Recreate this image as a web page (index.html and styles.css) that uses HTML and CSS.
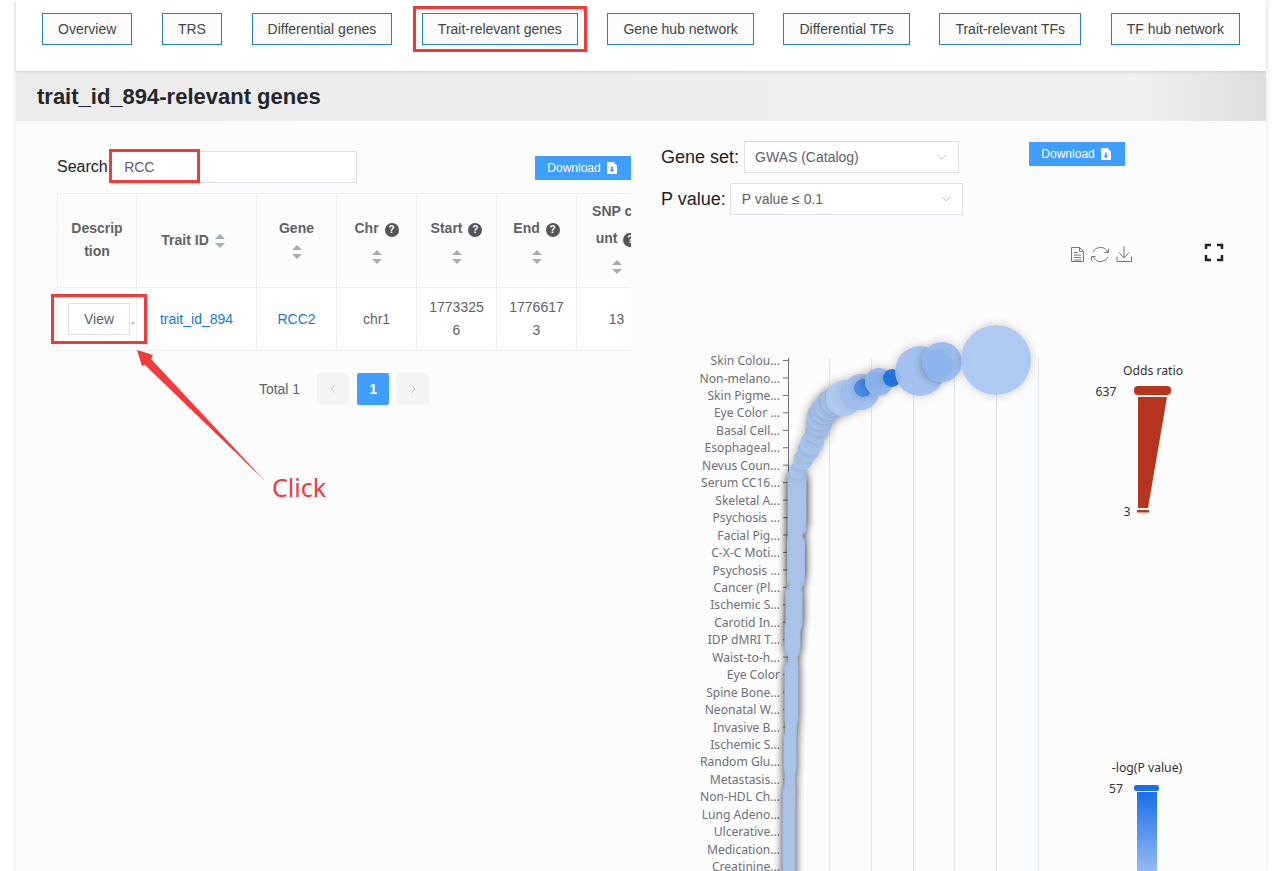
FILE: index.html
```html
<!DOCTYPE html>
<html lang="en">
<head>
    <meta charset="UTF-8">
    <meta name="viewport" content="width=device-width, initial-scale=1.0">
    <title>Trait-relevant genes</title>
    <link rel="stylesheet" href="styles.css">
</head>
<body>
    <div class="page">
        <nav class="tabs">
            <a class="tab">Overview</a>
            <a class="tab">TRS</a>
            <a class="tab">Differential genes</a>
            <a class="tab">Trait-relevant genes</a>
            <a class="tab">Gene hub network</a>
            <a class="tab">Differential TFs</a>
            <a class="tab">Trait-relevant TFs</a>
            <a class="tab">TF hub network</a>
        </nav>

        <h2 class="title">trait_id_894-relevant genes</h2>

        <main class="content">
            <section class="left">
                <div class="search-row">
                    <label class="search-label">Search:</label>
                    <input class="search-input" type="text" value="RCC">
                    <button class="download download-left">Download
                        <svg class="file-icon" viewBox="0 0 10 12"><path fill="#fff" d="M1 0h5.500L10 3.500V11a1 1 0 0 1-1 1H1a1 1 0 0 1-1-1V1a1 1 0 0 1 1-1z"/><path fill="#409eff" d="M4.200 4.500h1.600v3H7.500L5 10.200 2.500 7.500h1.700z"/></svg>
                    </button>
                </div>

                <div class="table-wrap">
                    <table class="genes">
                        <thead>
                            <tr>
                                <th class="two-line">Description</th>
                                <th>Trait ID <span class="sort sort-inline"></span></th>
                                <th class="two-line">Gene<br><span class="sort"></span></th>
                                <th class="tall">Chr <span class="help">?</span><br><span class="sort"></span></th>
                                <th class="tall">Start <span class="help">?</span><br><span class="sort"></span></th>
                                <th class="tall">End <span class="help">?</span><br><span class="sort"></span></th>
                                <th class="tall snp">SNP count <span class="help">?</span><br><span class="sort"></span></th>
                            </tr>
                        </thead>
                        <tbody>
                            <tr>
                                <td class="view-cell"><button class="view">View</button>.</td>
                                <td><a class="link">trait_id_894</a></td>
                                <td><a class="link">RCC2</a></td>
                                <td>chr1</td>
                                <td>17733256</td>
                                <td>17766173</td>
                                <td>13</td>
                            </tr>
                        </tbody>
                    </table>
                </div>

                <div class="pager">
                    <span class="total">Total 1</span>
                    <span class="page-btn"><svg width="8" height="10" viewBox="0 0 8 10"><path d="M6 1 2 5l4 4" fill="none" stroke="#c0c4cc"/></svg></span>
                    <span class="page-btn active">1</span>
                    <span class="page-btn"><svg width="8" height="10" viewBox="0 0 8 10"><path d="m2 1 4 4-4 4" fill="none" stroke="#c0c4cc"/></svg></span>
                </div>
            </section>

            <section class="right">
                <div class="filter-row">
                    <label class="filter-label">Gene set:</label>
                    <div class="select select-set">GWAS (Catalog)
                        <svg class="chevron" width="10" height="6" viewBox="0 0 10 6"><path d="m1 1 4 4 4-4" fill="none" stroke="#c0c4cc"/></svg>
                    </div>
                    <button class="download download-right">Download
                        <svg class="file-icon" viewBox="0 0 10 12"><path fill="#fff" d="M1 0h5.500L10 3.500V11a1 1 0 0 1-1 1H1a1 1 0 0 1-1-1V1a1 1 0 0 1 1-1z"/><path fill="#409eff" d="M4.200 4.500h1.600v3H7.500L5 10.200 2.500 7.500h1.700z"/></svg>
                    </button>
                </div>
                <div class="filter-row filter-row-p">
                    <label class="filter-label">P value:</label>
                    <div class="select select-p">P value ≤ 0.1
                        <svg class="chevron" width="10" height="6" viewBox="0 0 10 6"><path d="m1 1 4 4 4-4" fill="none" stroke="#c0c4cc"/></svg>
                    </div>
                </div>

                <svg id="chart" class="chart" viewBox="661 230 605 641" xmlns="http://www.w3.org/2000/svg">
                    <defs>
                        <filter id="soft" x="-80%" y="-80%" width="260%" height="260%">
                            <feDropShadow dx="0" dy="0" stdDeviation="5" flood-color="#000" flood-opacity="0.22"/>
                        </filter>
                        <linearGradient id="pvalue" x1="0" y1="0" x2="0" y2="1">
                            <stop offset="0" stop-color="#1a6fe8"/>
                            <stop offset="1" stop-color="#a5c4f5"/>
                        </linearGradient>
                    </defs>

                    <!-- toolbox -->
                    <g fill="none" stroke="#777">
                        <path d="M1071.500 247.500h8l4 4v10h-12zM1079.500 247.500v4h4M1074 252.500h4M1074 255h7M1074 257.500h7M1074 260h7"/>
                        <path d="M1093 252a8 8 0 0 1 14-1l1.500 2M1108 257a8 8 0 0 1-14 1l-1.500-2M1104.500 252.500h4v-4M1095.500 256.500h-4v4"/>
                        <path d="M1124 246.500v11M1119 252.500l5 5.500 5-5.500M1117 256.500v5h14.500v-5"/>
                    </g>
                    <path fill="none" stroke="#222" stroke-width="2.500" d="M1206 249v-4h5M1217 245h5v4M1222 255v5h-5M1211 260h-5v-5"/>

                    <g id="grid" stroke="#e0e6f1"></g>
                    <g id="axis"></g>
                    <g id="bubbles"></g>

                    <!-- odds ratio legend -->
                    <text class="legend-text" x="1153" y="375" text-anchor="middle">Odds ratio</text>
                    <text class="legend-text" x="1106" y="396" text-anchor="middle">637</text>
                    <text class="legend-text" x="1127" y="516" text-anchor="middle">3</text>
                    <rect x="1134" y="386" width="37" height="9" rx="4" fill="#b5351e"/>
                    <path d="M1138 397h29l-19 111h-10z" fill="#b5351e"/>
                    <rect x="1137" y="510" width="12" height="2.500" fill="#b5351e"/>

                    <!-- p value legend -->
                    <text class="legend-text" x="1147" y="772" text-anchor="middle">-log(P value)</text>
                    <text class="legend-text" x="1116" y="793" text-anchor="middle">57</text>
                    <rect x="1134" y="785" width="25" height="6" rx="2.500" fill="#1a6fe8"/>
                    <rect x="1137" y="792" width="20" height="90" fill="url(#pvalue)"/>
                </svg>
            </section>
        </main>

        <!-- red annotations on top of the page -->
        <div class="mark mark-tab"></div>
        <div class="mark mark-search"></div>
        <div class="mark mark-view"></div>
        <svg class="arrow" width="140" height="140" viewBox="130 345 140 140"><path fill="#f33a3a" d="M137 350 153 355 151 359 265 481 145 365 142 366z"/></svg>
        <span class="click">Click</span>
    </div>

    <script src="chart.js"></script>
</body>
</html>
```

FILE: styles.css
```css
html, body {
    margin: 0;
    height: 871px;
    overflow: hidden;
    background-color: #fff;
}

body {
    font-family: "Liberation Sans", Arial, sans-serif;
    font-size: 14px;
    color: #606266;
}

.page {
    width: 1250px;
    height: 871px;
    margin-left: 16px;
    background-color: #fcfcfc;
    box-shadow: 0 0 5px rgba(0, 0, 0, 0.12);
}

.tabs {
    display: flex;
    justify-content: space-between;
    box-sizing: border-box;
    height: 71px;
    padding: 13px 26px 0;
    background-color: #fff;
    box-shadow: 0 1px 3px rgba(0, 0, 0, 0.12);
    position: relative;
}

.tab {
    box-sizing: border-box;
    height: 32px;
    padding: 0 15px;
    line-height: 30px;
    border: 1px solid #2280c6;
    background-color: #fbfbfb;
    color: #444;
    white-space: nowrap;
}

.title {
    box-sizing: border-box;
    height: 50px;
    margin: 0;
    padding-left: 21px;
    line-height: 52px;
    font-size: 22px;
    font-weight: bold;
    color: #22262b;
    background: linear-gradient(to right, #ececec 0%, #f0f0f0 90%, #dedede 100%);
}

.content {
    display: flex;
    gap: 30px;
    padding: 20px 0 0 41px;
}

.left {
    width: 574px;
    padding-top: 10px;
}

.search-row {
    display: flex;
    align-items: center;
    height: 32px;
}

.search-label {
    font-size: 16px;
    color: #222;
}

.search-input {
    box-sizing: border-box;
    width: 247px;
    height: 32px;
    margin-left: -2px;
    padding: 0 13px;
    border: 1px solid #dcdfe6;
    background-color: #fff;
    font: 14px "Liberation Sans", Arial, sans-serif;
    color: #606266;
    outline: none;
}

.download {
    display: flex;
    align-items: center;
    justify-content: center;
    gap: 6px;
    box-sizing: border-box;
    width: 96px;
    height: 24px;
    padding: 0 2px 0 0;
    border: none;
    background-color: #409eff;
    color: #fff;
    font: 12px "Liberation Sans", Arial, sans-serif;
}

.download-left {
    margin-left: auto;
    margin-top: 1px;
}

.download-right {
    margin-left: 65px;
    align-self: flex-start;
    margin-top: 1px;
}

.file-icon {
    width: 10px;
    height: 12px;
}

.table-wrap {
    width: 574px;
    margin-top: 10px;
    overflow: hidden;
}

.genes {
    table-layout: fixed;
    width: 599px;
    border-collapse: collapse;
    border-spacing: 0;
}

.genes th,
.genes td {
    border: 1px solid #ebeef5;
    padding: 0 12px;
    text-align: center;
    word-break: break-all;
}

.genes th:nth-child(1) {
    width: 79px;
}

.genes th:nth-child(3),
.genes th:nth-child(4),
.genes th:nth-child(5),
.genes th:nth-child(6),
.genes th:nth-child(7) {
    width: 80px;
}

.genes th:nth-child(2) {
    width: 120px;
}

.genes th {
    box-sizing: border-box;
    height: 94px;
    line-height: 23px;
    font-weight: bold;
    color: #606266;
}

.genes th.two-line {
    padding-bottom: 2px;
}

.genes th.tall {
    line-height: 28px;
    padding-top: 3px;
}

.genes th.snp {
    line-height: 27.5px;
    padding-top: 0;
    padding-bottom: 3px;
}

.genes td {
    height: 62px;
    line-height: 23px;
    background-color: #fff;
}

.genes td.view-cell {
    padding: 0 0 0 10px;
    text-align: left;
    color: #606266;
    word-break: normal;
}

.view {
    box-sizing: border-box;
    width: 62px;
    height: 32px;
    padding: 0;
    margin-right: 1px;
    border: 1px solid #dcdfe6;
    background-color: #fff;
    color: #606266;
    font: 14px "Liberation Sans", Arial, sans-serif;
}

.link {
    color: #1677e5;
}

.sort {
    display: inline-block;
    position: relative;
    width: 10px;
    height: 14px;
    vertical-align: middle;
}

.sort-inline {
    margin: 0 7px 0 2px;
}

.sort::before,
.sort::after {
    content: "";
    position: absolute;
    left: 0;
    border-left: 5px solid transparent;
    border-right: 5px solid transparent;
}

.sort::before {
    top: 0;
    border-bottom: 5px solid #a8abb2;
}

.sort::after {
    bottom: 0;
    border-top: 5px solid #a8abb2;
}

.help {
    display: inline-block;
    width: 14px;
    height: 14px;
    margin-left: 2px;
    border-radius: 50%;
    background-color: #555;
    color: #fff;
    font-size: 10px;
    line-height: 14px;
    vertical-align: 0;
    text-align: center;
}

.pager {
    display: flex;
    justify-content: center;
    align-items: center;
    gap: 8px;
    margin-top: 22px;
}

.total {
    margin-right: 9px;
    font-size: 14px;
}

.page-btn {
    display: flex;
    align-items: center;
    justify-content: center;
    width: 32px;
    height: 32px;
    border-radius: 2px;
    background-color: #f4f4f5;
    font-weight: bold;
}

.page-btn.active {
    background-color: #409eff;
    color: #fff;
}

.right {
    width: 605px;
}

.filter-row {
    display: flex;
    align-items: center;
    gap: 5px;
    height: 32px;
    margin-bottom: 10px;
}

.filter-row-p {
    gap: 4px;
}

.filter-label {
    font-size: 18px;
    color: #222;
}

.select {
    display: flex;
    align-items: center;
    justify-content: space-between;
    box-sizing: border-box;
    height: 32px;
    padding: 0 11px;
    border: 1px solid #dcdfe6;
    background-color: #fff;
    color: #606266;
}

.select-set {
    width: 215px;
    padding-left: 10px;
}

.select-p {
    width: 233px;
}

.chart {
    display: block;
    width: 605px;
    height: 641px;
    margin-top: 15px;
}

.axis-label {
    font: 12.1px "Noto Sans", sans-serif;
    fill: #6e7079;
}

.legend-text {
    font: 12.2px "Noto Sans", sans-serif;
    fill: #333;
}

.mark {
    position: absolute;
    box-sizing: border-box;
    border: 3px solid #f33a3a;
}

.mark-tab {
    left: 413px;
    top: 6px;
    width: 174px;
    height: 46px;
}

.mark-search {
    left: 109px;
    top: 149px;
    width: 91px;
    height: 34px;
}

.mark-view {
    left: 51px;
    top: 294px;
    width: 96px;
    height: 50px;
}

.arrow {
    position: absolute;
    left: 130px;
    top: 345px;
}

.click {
    position: absolute;
    left: 272px;
    top: 470px;
    font: 25px "Noto Sans", sans-serif;
    color: #f33a3a;
}
```

FILE: chart.js
```js
const NS = "http://www.w3.org/2000/svg";

const labels = [
    "Skin Colou...", "Non-melano...", "Skin Pigme...", "Eye Color ...", "Basal Cell...",
    "Esophageal...", "Nevus Coun...", "Serum CC16...", "Skeletal A...", "Psychosis ...",
    "Facial Pig...", "C-X-C Moti...", "Psychosis ...", "Cancer (Pl...", "Ischemic S...",
    "Carotid In...", "IDP dMRI T...", "Waist-to-h...", "Eye Color", "Spine Bone...",
    "Neonatal W...", "Invasive B...", "Ischemic S...", "Random Glu...", "Metastasis...",
    "Non-HDL Ch...", "Lung Adeno...", "Ulcerative...", "Medication...", "Creatinine..."
];

function add(parent, tag, attrs, text) {
    const el = document.createElementNS(NS, tag);
    for (const key in attrs) {
        el.setAttribute(key, attrs[key]);
    }
    if (text) {
        el.textContent = text;
    }
    document.getElementById(parent).appendChild(el);
}

// grid lines
[829, 871, 913, 954, 996, 1038].forEach(function (x) {
    add("grid", "line", { x1: x + 0.5, x2: x + 0.5, y1: 358, y2: 871 });
});

// y axis
add("axis", "line", { x1: 788.5, x2: 788.5, y1: 358, y2: 871, stroke: "#6e7079" });
labels.forEach(function (label, i) {
    const y = 360.5 + i * 17.45;
    add("axis", "line", { x1: 783, x2: 788, y1: y, y2: y, stroke: "#6e7079" });
    add("axis", "text", { x: 780, y: y + 4.6, "text-anchor": "end", class: "axis-label" }, label);
});

// column of small points, from the bottom up: [y end, y start, x, r]
const column = [
    [880, 790, 789, 6.5],
    [790, 770, 790, 5.5],
    [770, 735, 790, 6.5],
    [735, 720, 791, 6],
    [720, 665, 791.5, 7],
    [665, 650, 793, 5],
    [650, 625, 792.5, 8],
    [625, 590, 794, 8.5],
    [590, 581, 795, 5.5],
    [581, 540, 796, 9],
    [540, 528, 795, 7.5],
    [528, 476, 797, 9.5]
];

// first pass carries the shadow, second pass lightens the stack back up
column.forEach(function (seg) {
    for (let y = seg[0]; y >= seg[1]; y -= 2) {
        add("bubbles", "circle", {
            cx: seg[2], cy: y, r: seg[3],
            fill: "#adc6ee", "fill-opacity": 0.92, filter: "url(#soft)"
        });
    }
});
column.forEach(function (seg) {
    for (let y = seg[0]; y >= seg[1]; y -= 2) {
        add("bubbles", "circle", {
            cx: seg[2], cy: y, r: seg[3],
            fill: "#abc3ea", "fill-opacity": 0.5
        });
    }
});

// bigger points at the top: [x, y, r, fill]
const light = "#a9c5f0";
const points = [
    [797, 471, 8, light], [803, 460, 10, light], [808, 451, 11, light], [812, 443, 12, light],
    [817, 431, 12, light], [819, 423, 13, light], [821, 416, 14, light], [825, 410, 14, light],
    [830, 405, 15, light], [836, 401, 15, light], [844, 398, 18, "#b0cbf4"], [861, 392, 18, "#9dbdf0"],
    [863, 388, 9, "#3f86e6"], [875, 380, 9, "#3f86e6"], [879, 382, 14, "#8fb6f0"], [892, 378, 9, "#1a6fe0"],
    [920, 371, 25, "#9dbef0"], [938, 365, 15, "#3f86e6"], [942, 362, 20, "#94b9f0"], [996, 360, 35, "#a9c7f3"]
];

points.forEach(function (p) {
    add("bubbles", "circle", {
        cx: p[0], cy: p[1], r: p[2],
        fill: p[3], "fill-opacity": 0.9, filter: "url(#soft)"
    });
});
```
